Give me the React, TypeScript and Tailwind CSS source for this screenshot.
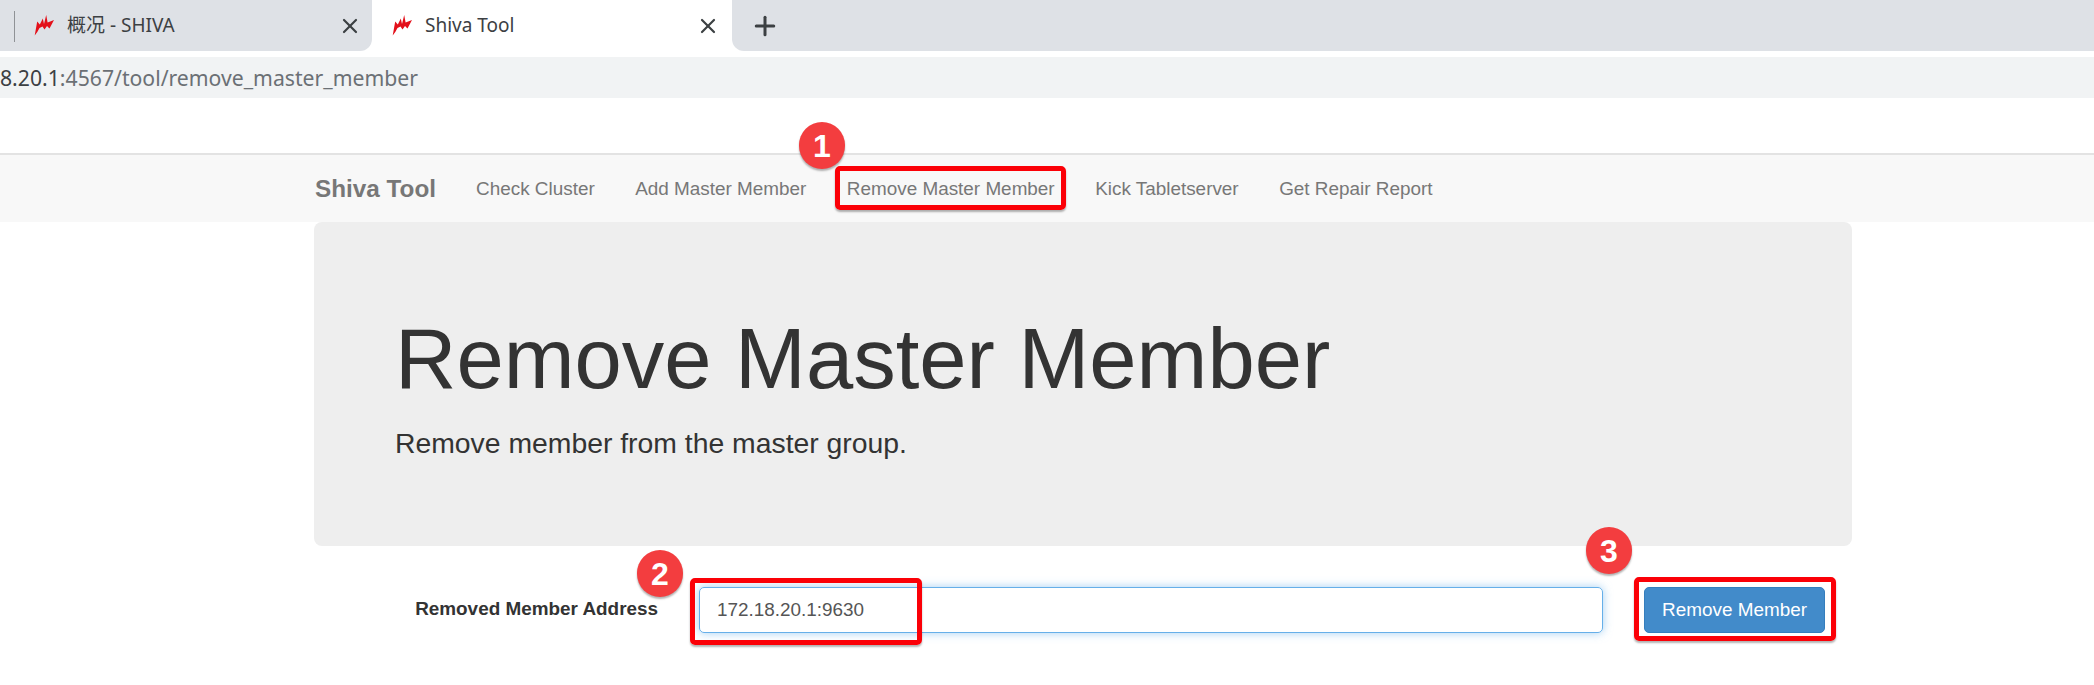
import { X, Plus } from "lucide-react";

const NAV_LINKS = ["Check Cluster", "Add Master Member", "Remove Master Member", "Kick Tabletserver", "Get Repair Report"];

function Favicon() {
  return (
    <svg width="20" height="21" viewBox="0 0 20 21" className="shrink-0">
      <path d="M0.7 20.5 L3.2 6.5 L5.8 9.5 L8.8 3.5 L10 9 L12.2 0 L13.6 7.5 L20 5 L15.5 13.5 L13 11 L10.5 14.5 L8.5 11.5 L5.5 13 L3.3 17 Z" fill="#e3101a" />
    </svg>
  );
}

function Tab({ title, active }: { title: string; active?: boolean }) {
  return (
    <div
      className={
        active
          ? "flex h-[51px] w-[360px] items-center rounded-t-[12px] bg-white pl-[20px] pr-[12px]"
          : "flex h-[51px] w-[358px] items-center rounded-br-[12px] bg-[#dee1e6] pl-[20px] pr-[10px]"
      }
    >
      <Favicon />
      <span className="ml-[13px] flex-1 text-[19px] text-[#3c4043] [font-family:'Noto_Sans','Noto_Sans_CJK_SC',sans-serif]">
        {title}
      </span>
      <X size={24} strokeWidth={2.2} className="text-[#3c4043]" />
    </div>
  );
}

function Badge({ n, className }: { n: number; className: string }) {
  return (
    <div
      className={`absolute flex h-[47px] w-[46px] items-center justify-center rounded-full bg-[#f33d3f] text-[32px] font-bold text-white shadow-[0_2px_2px_rgba(0,0,0,0.3)] ${className}`}
    >
      {n}
    </div>
  );
}

function RedBox({ className }: { className: string }) {
  return (
    <div
      className={`absolute rounded-[5px] border-[5px] border-[#fb0007] shadow-[0_2px_2px_rgba(0,0,0,0.3)] ${className}`}
    />
  );
}

export default function App() {
  return (
    <div className="relative h-[685px] w-[2094px] overflow-hidden bg-white [font-family:'Liberation_Sans',Arial,sans-serif]">
      {/* browser chrome */}
      <div className="relative flex h-[51px] items-start">
        <div className="h-[51px] w-[14px] bg-[#dee1e6]" />
        <div className="absolute left-[14px] top-[11px] z-10 h-[31px] w-px bg-[#8f9296]" />
        <Tab title="概况 - SHIVA" />
        <Tab title="Shiva Tool" active />
        <div className="h-[51px] flex-1 rounded-bl-[12px] bg-[#dee1e6] pl-[18px] pt-[11px]">
          <Plus size={30} strokeWidth={2.4} className="text-[#3c4043]" />
        </div>
      </div>
      <div className="h-[6px] bg-white" />
      <div className="flex h-[41px] items-center overflow-hidden bg-[#f1f3f4] text-[21.2px] text-[#6b7075] [font-family:'Noto_Sans',sans-serif]">
        <span className="text-[#3c4043]">8.20.1</span>
        <span>:4567/tool/remove_master_member</span>
      </div>

      {/* page */}
      <div className="mt-[55px] h-[69px] border-t-2 border-[#e3e3e3] bg-[#f8f8f8]">
        <div className="ml-[314px] flex h-full w-[1538px] items-center pl-px pt-[1px]">
          <span className="mr-[40px] text-[24.3px] font-bold text-[#777777]">Shiva Tool</span>
          <div className="flex gap-[40.5px] text-[18.9px] text-[#777777]">
            {NAV_LINKS.map((link) => (
              <span key={link}>{link}</span>
            ))}
          </div>
        </div>
      </div>
      <div className="ml-[314px] h-[324px] w-[1538px] rounded-[8px] bg-[#eeeeee] pl-[81px] pt-[91px] text-[#333333]">
        <h1 className="text-[85px] leading-[92px]">Remove Master Member</h1>
        <p className="mt-[18px] text-[28.35px] leading-[40px]">Remove member from the master group.</p>
      </div>
      <div className="ml-[314px] mt-[41px] flex w-[1538px] items-center">
        <label className="w-[344px] -translate-y-[1px] text-right text-[18.9px] font-bold text-[#333333]">
          Removed Member Address
        </label>
        <input
          readOnly
          value="172.18.20.1:9630"
          className="ml-[41px] h-[46px] w-[904px] rounded-[5px] border border-[#66afe9] px-[17px] text-[18.9px] text-[#555555] shadow-[0_0_10px_rgba(102,175,233,0.6)] outline-none"
        />
        <button className="ml-[41px] h-[46px] w-[181px] rounded-[5px] border border-[#357ebd] bg-[#428bca] text-[18.9px] text-white">
          Remove Member
        </button>
      </div>

      {/* annotations */}
      <RedBox className="left-[835px] top-[166px] h-[44px] w-[231px]" />
      <RedBox className="left-[690px] top-[578px] h-[67px] w-[232px]" />
      <RedBox className="left-[1634px] top-[577px] h-[64px] w-[202px]" />
      <Badge n={1} className="left-[799px] top-[122px]" />
      <Badge n={2} className="left-[637px] top-[550px]" />
      <Badge n={3} className="left-[1586px] top-[527px]" />
    </div>
  );
}
